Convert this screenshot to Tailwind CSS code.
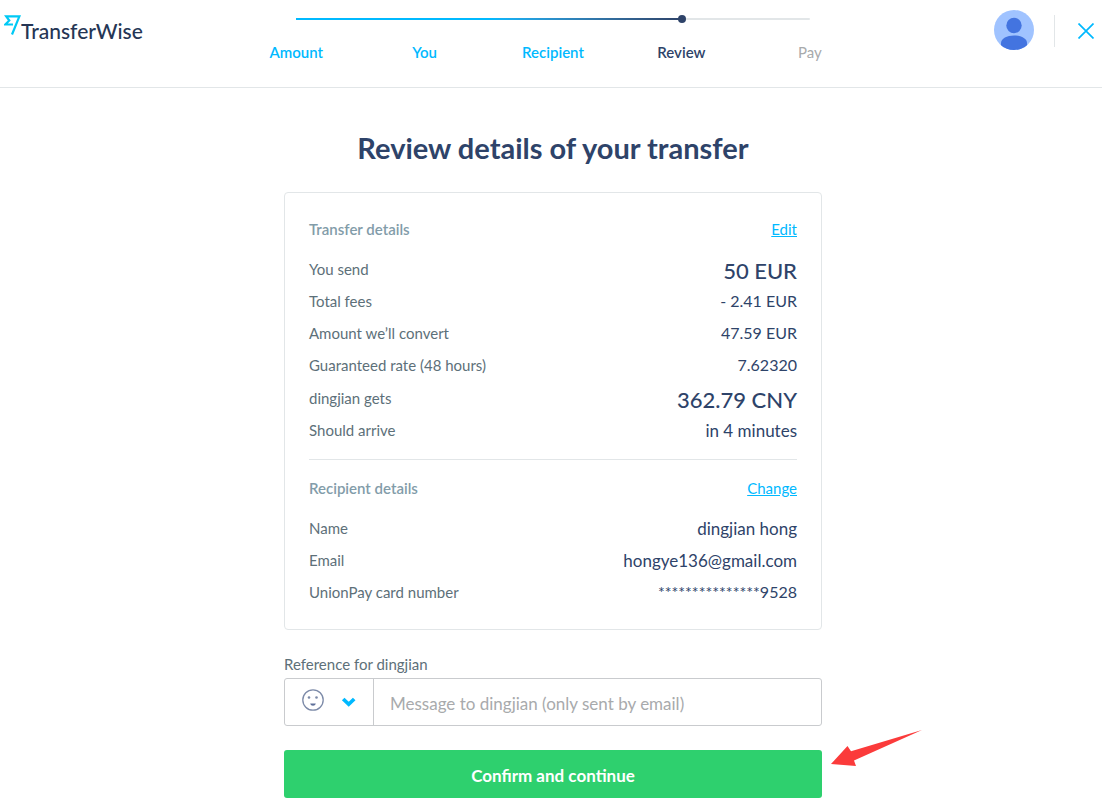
<!DOCTYPE html>
<html lang="en">
  <head>
    <meta charset="UTF-8" />
    <meta name="viewport" content="width=device-width, initial-scale=1.0" />
    <title>Review - TransferWise</title>
    <script src="https://cdn.jsdelivr.net/npm/@tailwindcss/browser@4"></script>
  </head>
  <body class="bg-white font-['Lato','Open_Sans',sans-serif] text-[#2e4369]">
    <!-- Header -->
    <header class="grid grid-cols-[1fr_642px_1fr] items-start pl-1 h-[88px] border-b border-[#e2e6e8]">
      <a href="#" class="flex items-start pt-[15px]" aria-label="TransferWise">
        <svg class="w-[17px] h-5 shrink-0" viewBox="0 0 17 20" fill="none" stroke="#00c9f5" stroke-width="2.200">
          <path d="M8 19.500 15.400 1.300H2.200L5.300 5.500 1.300 9.500H9" />
        </svg>
        <span class="pt-1 text-[21px] leading-6 font-medium text-[#253655]">TransferWise</span>
      </a>

      <!-- Steps -->
      <nav aria-label="Progress" class="pt-[15px]">
        <div class="flex items-center mx-16 h-2">
          <div class="w-3/4 h-0.5 bg-linear-to-r from-[#00b9ff] from-50% to-[#2e4369]"></div>
          <div class="-mx-1 size-2 rounded-full bg-[#2e4369] z-10"></div>
          <div class="flex-1 h-0.5 rounded-r bg-[#e2e6e8]"></div>
        </div>
        <ol class="grid grid-cols-5 mt-[19px] text-center text-[15px] leading-5 font-semibold">
          <li><a href="#" class="text-[#00b9ff]">Amount</a></li>
          <li><a href="#" class="text-[#00b9ff]">You</a></li>
          <li><a href="#" class="text-[#00b9ff]">Recipient</a></li>
          <li aria-current="step">Review</li>
          <li class="font-normal text-[#a8aaac]">Pay</li>
        </ol>
      </nav>

      <div class="flex items-start justify-end gap-5 pt-2.5 pr-2">
        <button type="button" aria-label="Account" class="rounded-full">
          <svg class="size-10" viewBox="0 0 40 40">
            <clipPath id="avatar"><circle cx="20" cy="20" r="20" /></clipPath>
            <g clip-path="url(#avatar)">
              <rect width="40" height="40" fill="#a0c3ff" />
              <circle cx="20" cy="15.500" r="7.700" fill="#4374e0" />
              <path d="M7 40v-7c0-4.500 6-7.500 13-7.500s13 3 13 7.500v7z" fill="#4374e0" />
            </g>
          </svg>
        </button>
        <div class="flex items-center gap-[23px] pt-[5px]">
          <div class="w-px h-8 bg-[#e2e6e8]"></div>
          <button type="button" aria-label="Close">
            <svg class="size-4" viewBox="0 0 16 16" fill="none" stroke="#00b9ff" stroke-width="1.700">
              <path d="M.5.5l15 15M15.500.5l-15 15" />
            </svg>
          </button>
        </div>
      </div>
    </header>

    <main class="pl-1">
      <div class="relative max-w-[538px] mx-auto pb-3">
        <h1 class="pt-10 pb-6 text-center text-[29px] leading-10 font-bold">Review details of your transfer</h1>

        <!-- Summary -->
        <div class="px-6 pt-5 pb-[21px] border border-[#e2e6e8] rounded">
          <section>
            <div class="flex items-center justify-between h-8 mb-2">
              <h2 class="text-[15px] font-semibold text-[#829ca9]">Transfer details</h2>
              <a href="#" class="text-[15px] text-[#00b9ff] underline">Edit</a>
            </div>
            <dl class="leading-8">
              <div class="flex justify-between h-8">
                <dt class="text-[15px] text-[#5d7079]">You send</dt>
                <dd class="pt-0.5 text-[22px] font-medium">50 EUR</dd>
              </div>
              <div class="flex justify-between h-8">
                <dt class="text-[15px] text-[#5d7079]">Total fees</dt>
                <dd class="text-base leading-8">- 2.41 EUR</dd>
              </div>
              <div class="flex justify-between h-8">
                <dt class="text-[15px] text-[#5d7079]">Amount we’ll convert</dt>
                <dd class="text-base leading-8">47.59 EUR</dd>
              </div>
              <div class="flex justify-between h-[33px]">
                <dt class="text-[15px] text-[#5d7079]">Guaranteed rate (48 hours)</dt>
                <dd class="text-base leading-8">7.62320</dd>
              </div>
              <div class="flex justify-between h-8">
                <dt class="text-[15px] text-[#5d7079]">dingjian gets</dt>
                <dd class="pt-0.5 text-[22px] font-medium">362.79 CNY</dd>
              </div>
              <div class="flex justify-between h-8">
                <dt class="text-[15px] text-[#5d7079]">Should arrive</dt>
                <dd class="text-[17px] leading-[34px]">in 4 minutes</dd>
              </div>
            </dl>
          </section>

          <hr class="mt-[13px] mb-3 border-[#e2e6e8]" />

          <section>
            <div class="flex items-center justify-between h-8 mb-2">
              <h2 class="text-[15px] font-semibold text-[#829ca9]">Recipient details</h2>
              <a href="#" class="text-[15px] text-[#00b9ff] underline">Change</a>
            </div>
            <dl class="leading-8">
              <div class="flex justify-between h-8">
                <dt class="text-[15px] text-[#5d7079]">Name</dt>
                <dd class="text-[17px] leading-[34px]">dingjian hong</dd>
              </div>
              <div class="flex justify-between h-8">
                <dt class="text-[15px] text-[#5d7079]">Email</dt>
                <dd class="text-[17px] leading-[34px]">hongye136@gmail.com</dd>
              </div>
              <div class="flex justify-between h-8">
                <dt class="text-[15px] text-[#5d7079]">UnionPay card number</dt>
                <dd class="text-base leading-8">***************9528</dd>
              </div>
            </dl>
          </section>
        </div>

        <!-- Reference -->
        <form>
          <label for="reference" class="block pt-[22px] pb-0.5 text-[15px] leading-6 text-[#5d7079]">Reference for dingjian</label>
          <div class="flex h-12 border border-[#c9cbce] rounded-[3px]">
            <button type="button" aria-label="Choose an emoji" class="flex items-center gap-4 pl-[17px] w-[89px] border-r border-[#c9cbce]">
              <svg class="size-[22px] mb-1" viewBox="0 0 22 22" fill="none">
                <circle cx="11" cy="11" r="10.200" stroke="#7c8aa8" stroke-width="1.300" />
                <circle cx="7" cy="8.500" r="1.300" fill="#7c8aa8" />
                <circle cx="14.500" cy="8.500" r="1.300" fill="#7c8aa8" />
                <path d="M8.200 14.500h5.600c-.4 1.500-1.400 2.200-2.800 2.200s-2.400-.7-2.800-2.200z" fill="#5f709a" />
              </svg>
              <svg class="w-[17px] h-3" viewBox="0 0 17 12" fill="none" stroke="#00b9ff" stroke-width="3.700">
                <path d="M3.200 3 8.700 8.300 14.200 3" />
              </svg>
            </button>
            <input
              id="reference"
              type="text"
              placeholder="Message to dingjian (only sent by email)"
              class="flex-1 px-4 pt-1 text-[17px] placeholder:text-[#a8aaac] focus:outline-none"
            />
          </div>
          <button type="submit" class="w-full h-12 mt-6 pt-1 rounded-[3px] bg-[#2ed06e] text-[17px] font-bold text-white">
            Confirm and continue
          </button>
        </form>

        <!-- Pointer to the confirm button -->
        <svg class="absolute left-full bottom-[42px] ml-2 w-[92px] h-10" viewBox="0 0 92 40">
          <path d="M1 36 17.500 18 21 23.200 92 2 24 32.600 26 38z" fill="#fb3b3b" />
        </svg>
      </div>
    </main>
  </body>
</html>
